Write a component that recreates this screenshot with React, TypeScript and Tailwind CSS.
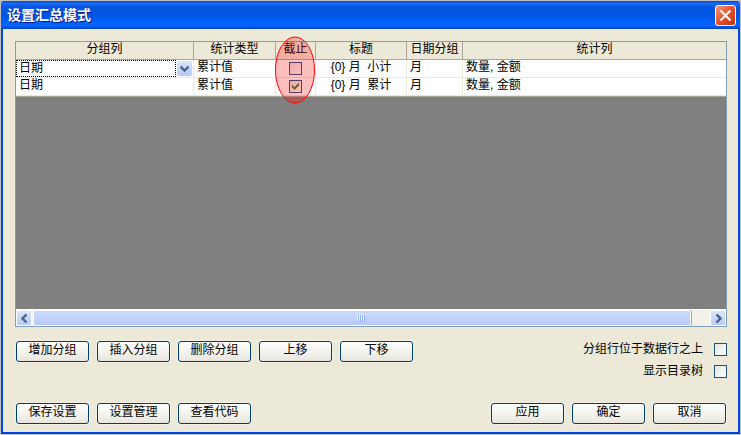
import { useState } from 'react';

interface SummaryRow {
  column: string;
  type: string;
  cutoff: boolean;
  title: string;
  dateGroup: string;
  stats: string;
}

const initialRows: SummaryRow[] = [
  { column: '日期', type: '累计值', cutoff: false, title: '{0} 月  小计', dateGroup: '月', stats: '数量, 金额' },
  { column: '日期', type: '累计值', cutoff: true, title: '{0} 月  累计', dateGroup: '月', stats: '数量, 金额' },
];

const XpButton = ({ label }: { label: string }) => (
  <button
    type="button"
    className="h-[21px] w-[73px] rounded-[3px] border border-[#003c74] bg-linear-to-b from-white via-[#f4f3ee] to-[#e8e6dd] pb-[3px] text-center leading-4 shadow-[0_0_0_1px_#f3f1e6]"
  >
    {label}
  </button>
);

interface XpCheckboxProps {
  id: string;
  checked: boolean;
  label?: string;
  onChange: (checked: boolean) => void;
}

const XpCheckbox = ({ id, checked, label, onChange }: XpCheckboxProps) => (
  <span className="relative block size-[13px] shrink-0">
    <input
      id={id}
      type="checkbox"
      checked={checked}
      aria-label={label}
      onChange={(e) => onChange(e.target.checked)}
      className="block size-[13px] appearance-none border border-[#1c5180] bg-linear-to-br from-[#e4e4e0] to-white"
    />
    {checked && (
      <svg viewBox="0 0 13 13" className="pointer-events-none absolute inset-0 size-[13px]" shapeRendering="crispEdges">
        <path d="M3 5h1v1h1v1h1v-1h1v-1h1v-1h1v-1h1v3h-1v1h-1v1h-1v1h-1v1h-1v-1h-1v-1h-1z" fill="#21a121" />
      </svg>
    )}
  </span>
);

const Chevron = ({ d }: { d: string }) => (
  <svg viewBox="0 0 9 9" className="size-[9px]">
    <path d={d} fill="none" stroke="#4d6185" strokeWidth="2.4" />
  </svg>
);

const TitleBar = () => (
  <header className="flex h-[28px] items-center justify-between rounded-t-[3px] bg-[linear-gradient(to_bottom,#0a46c8_0%,#1668f5_9%,#0855dd_22%,#0054e3_50%,#0062fb_78%,#0064ff_88%,#0042c8_100%)] pr-1 pl-[6px]">
    <h1 className="text-[14px] leading-4 font-bold text-white [text-shadow:1px_1px_#0a1883]">设置汇总模式</h1>
    <button
      type="button"
      aria-label="关闭"
      className="flex size-[21px] items-center justify-center rounded-[3px] border border-white bg-linear-to-br from-[#f0987c] via-[#e2502c] to-[#c4350c]"
    >
      <svg viewBox="0 0 13 13" className="size-[13px]">
        <path d="M1.5 1.5l10 10M11.5 1.5l-10 10" stroke="#fff" strokeWidth="2.2" />
      </svg>
    </button>
  </header>
);

const ScrollBar = () => (
  <div className="flex h-[17px] border-t border-white bg-[#f3f2ea]">
    <button
      type="button"
      aria-label="向左滚动"
      className="flex w-4 items-center justify-center rounded-[2px] border border-white bg-linear-to-b from-[#dbe5fe] to-[#b7caf8]"
    >
      <Chevron d="M6.5 0.5l-4 4 4 4" />
    </button>
    <div className="flex flex-1">
      <div className="mx-px flex w-[97%] items-center justify-center gap-px rounded-[2px] border border-white bg-linear-to-b from-[#cbd9fd] via-[#c2d3fc] to-[#b4c8f6] shadow-[1px_0_#8ea9d8]">
        <span className="h-[7px] w-px bg-[#8cb0f8] shadow-[-1px_-1px_#eef4fe]" />
        <span className="h-[7px] w-px bg-[#8cb0f8] shadow-[-1px_-1px_#eef4fe]" />
        <span className="h-[7px] w-px bg-[#8cb0f8] shadow-[-1px_-1px_#eef4fe]" />
        <span className="h-[7px] w-px bg-[#8cb0f8] shadow-[-1px_-1px_#eef4fe]" />
      </div>
    </div>
    <button
      type="button"
      aria-label="向右滚动"
      className="flex w-4 items-center justify-center rounded-[2px] border border-white bg-linear-to-b from-[#dbe5fe] to-[#b7caf8]"
    >
      <Chevron d="M2.5 0.5l4 4-4 4" />
    </button>
  </div>
);

const headCell = 'relative h-[18px] border-r border-b border-[#aca899] p-0 font-normal leading-[14px] align-top last:border-r-0';
const bodyCell = 'h-[18px] border-r border-b border-[#ece9d8] px-[3px] py-0 leading-[14px] align-top last:border-r-0';

export default function App() {
  const [rows, setRows] = useState(initialRows);
  const [groupOnTop, setGroupOnTop] = useState(false);
  const [showTree, setShowTree] = useState(false);

  const setCutoff = (index: number, cutoff: boolean) => {
    setRows(rows.map((row, i) => (i === index ? { ...row, cutoff } : row)));
  };

  return (
    <div className="flex min-h-screen flex-col bg-[#c0c0c0] p-px font-['Liberation_Sans','Noto_Sans_CJK_SC',sans-serif] text-[12px] text-black">
      <TitleBar />

      <main className="flex flex-1 flex-col border-x-2 border-b-2 border-[#0046e0] bg-[#ece9d8] pt-3 pr-[11px] pb-2 pl-3">
        {/* Grid */}
        <section className="flex flex-1 flex-col border border-[#7f9db9] bg-[#808080]">
          <table className="w-full table-fixed border-separate border-spacing-0 border-b border-[#aca899] bg-white">
            <colgroup>
              <col className="w-[178px]" />
              <col className="w-[82px]" />
              <col className="w-[40px]" />
              <col className="w-[91px]" />
              <col className="w-[56px]" />
              <col />
            </colgroup>
            <thead className="bg-[#ece9d8]">
              <tr>
                <th className={headCell}>分组列</th>
                <th className={headCell}>统计类型</th>
                <th className={headCell}>
                  截止
                  {/* Highlight over the cutoff column */}
                  <svg
                    viewBox="0 0 40 68"
                    className="pointer-events-none absolute -top-[6px] -left-px z-10 h-[68px] w-[40px]"
                  >
                    <ellipse cx="20" cy="34" rx="19.5" ry="33" fill="#ff0000" fillOpacity="0.25" stroke="#ff0000" />
                  </svg>
                </th>
                <th className={headCell}>标题</th>
                <th className={headCell}>日期分组</th>
                <th className={headCell}>统计列</th>
              </tr>
            </thead>
            <tbody>
              {rows.map((row, i) => (
                <tr key={i}>
                  {i === 0 ? (
                    <td className="h-[18px] border-r border-b border-[#ece9d8] p-0 align-top">
                      <div className="relative h-[17px]">
                        <select
                          aria-label="分组列"
                          defaultValue={row.column}
                          className="block h-[17px] w-[160px] appearance-none border border-dotted border-black bg-white pb-[2px] pl-[2px] leading-3"
                        >
                          <option>{row.column}</option>
                        </select>
                        <span className="pointer-events-none absolute top-px right-px flex size-[15px] items-center justify-center rounded-[2px] bg-linear-to-b from-[#dbe5fe] to-[#b3c8f8]">
                          <Chevron d="M0.5 2.5l4 4 4-4" />
                        </span>
                      </div>
                    </td>
                  ) : (
                    <td className={bodyCell}>{row.column}</td>
                  )}
                  <td className={bodyCell}>{row.type}</td>
                  <td className={bodyCell}>
                    <div className="flex justify-center pt-[2px]">
                      <XpCheckbox
                        id={`cutoff-${i}`}
                        label="截止"
                        checked={row.cutoff}
                        onChange={(checked) => setCutoff(i, checked)}
                      />
                    </div>
                  </td>
                  <td className={`${bodyCell} text-center whitespace-pre`}>{row.title}</td>
                  <td className={bodyCell}>{row.dateGroup}</td>
                  <td className={bodyCell}>{row.stats}</td>
                </tr>
              ))}
            </tbody>
          </table>
          <div className="flex-1" />
          <ScrollBar />
        </section>

        {/* Row actions and options */}
        <div className="mt-[14px] flex items-start justify-between">
          <div className="flex gap-2 pl-px">
            <XpButton label="增加分组" />
            <XpButton label="插入分组" />
            <XpButton label="删除分组" />
            <XpButton label="上移" />
            <XpButton label="下移" />
          </div>
          <div className="flex flex-col items-end gap-[6px]">
            <div className="flex items-center gap-[11px]">
              <label htmlFor="group-on-top" className="leading-4">分组行位于数据行之上</label>
              <XpCheckbox id="group-on-top" checked={groupOnTop} onChange={setGroupOnTop} />
            </div>
            <div className="flex items-center gap-[11px]">
              <label htmlFor="show-tree" className="leading-4">显示目录树</label>
              <XpCheckbox id="show-tree" checked={showTree} onChange={setShowTree} />
            </div>
          </div>
        </div>

        {/* Dialog buttons */}
        <div className="mt-6 flex justify-between px-px">
          <div className="flex gap-2">
            <XpButton label="保存设置" />
            <XpButton label="设置管理" />
            <XpButton label="查看代码" />
          </div>
          <div className="flex gap-2">
            <XpButton label="应用" />
            <XpButton label="确定" />
            <XpButton label="取消" />
          </div>
        </div>
      </main>
    </div>
  );
}
